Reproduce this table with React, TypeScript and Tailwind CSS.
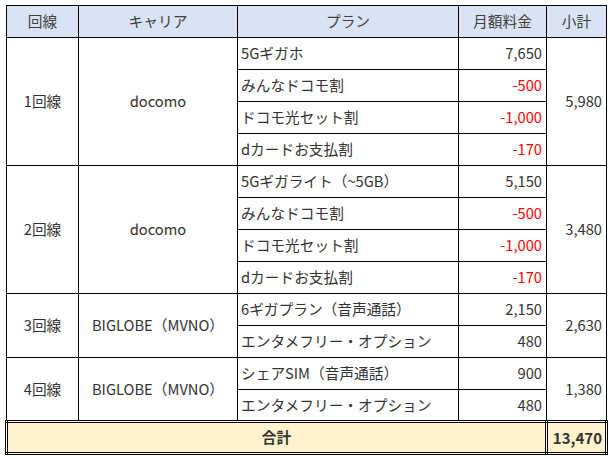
const groups = [
  {
    line: "1回線",
    carrier: "docomo",
    subtotal: "5,980",
    items: [
      { name: "5Gギガホ", price: "7,650", red: false },
      { name: "みんなドコモ割", price: "-500", red: true },
      { name: "ドコモ光セット割", price: "-1,000", red: true },
      { name: "dカードお支払割", price: "-170", red: true },
    ],
  },
  {
    line: "2回線",
    carrier: "docomo",
    subtotal: "3,480",
    items: [
      { name: "5Gギガライト（~5GB）", price: "5,150", red: false },
      { name: "みんなドコモ割", price: "-500", red: true },
      { name: "ドコモ光セット割", price: "-1,000", red: true },
      { name: "dカードお支払割", price: "-170", red: true },
    ],
  },
  {
    line: "3回線",
    carrier: "BIGLOBE（MVNO）",
    subtotal: "2,630",
    items: [
      { name: "6ギガプラン（音声通話）", price: "2,150", red: false },
      { name: "エンタメフリー・オプション", price: "480", red: false },
    ],
  },
  {
    line: "4回線",
    carrier: "BIGLOBE（MVNO）",
    subtotal: "1,380",
    items: [
      { name: "シェアSIM（音声通話）", price: "900", red: false },
      { name: "エンタメフリー・オプション", price: "480", red: false },
    ],
  },
];

export default function App() {
  return (
    <div className="w-[612px] h-[460px] bg-white pl-[5px] pt-[5px] font-['Noto_Sans_CJK_JP',sans-serif] text-[14.7px] text-[#333] leading-none">
      <table className="border-collapse table-fixed w-[600px]">
        <colgroup>
          <col className="w-[72px]" />
          <col className="w-[159px]" />
          <col className="w-[221px]" />
          <col className="w-[88px]" />
          <col className="w-[60px]" />
        </colgroup>
        <thead>
          <tr className="bg-[#dae3f3] text-[#404040]">
            <th className="h-[32px] border border-black font-normal">回線</th>
            <th className="border border-black font-normal">キャリア</th>
            <th className="border border-black font-normal">プラン</th>
            <th className="border border-black font-normal">月額料金</th>
            <th className="border border-black font-normal">小計</th>
          </tr>
        </thead>
        <tbody>
          {groups.map((g) =>
            g.items.map((item, i) => {
              const first = i === 0;
              const last = i === g.items.length - 1;
              const rowBorder = `${first ? "border-t-solid" : "border-t-dotted"} ${
                last ? "border-b-solid" : "border-b-dotted"
              }`;
              return (
                <tr key={g.line + i}>
                  {first && (
                    <td rowSpan={g.items.length} className="border border-black text-center">
                      {g.line}
                    </td>
                  )}
                  {first && (
                    <td rowSpan={g.items.length} className="border border-black text-center">
                      {g.carrier}
                    </td>
                  )}
                  <td className={`h-[32px] border border-black pl-[3px] whitespace-nowrap ${rowBorder}`}>
                    {item.name}
                  </td>
                  <td
                    className={`border border-black text-right pr-[4px] ${rowBorder} ${
                      item.red ? "text-[#ff0000]" : ""
                    }`}
                  >
                    {item.price}
                  </td>
                  {first && (
                    <td rowSpan={g.items.length} className="border border-black text-right pr-[4px]">
                      {g.subtotal}
                    </td>
                  )}
                </tr>
              );
            })
          )}
          <tr className="bg-[#fff2cc]">
            <td colSpan={4} className="h-[32px] border-[3px] border-double border-black text-center font-bold">
              合計
            </td>
            <td className="border-[3px] border-double border-black border-l border-l-solid text-right pr-[3px] font-bold text-[15px]">
              13,470
            </td>
          </tr>
        </tbody>
      </table>
    </div>
  );
}
